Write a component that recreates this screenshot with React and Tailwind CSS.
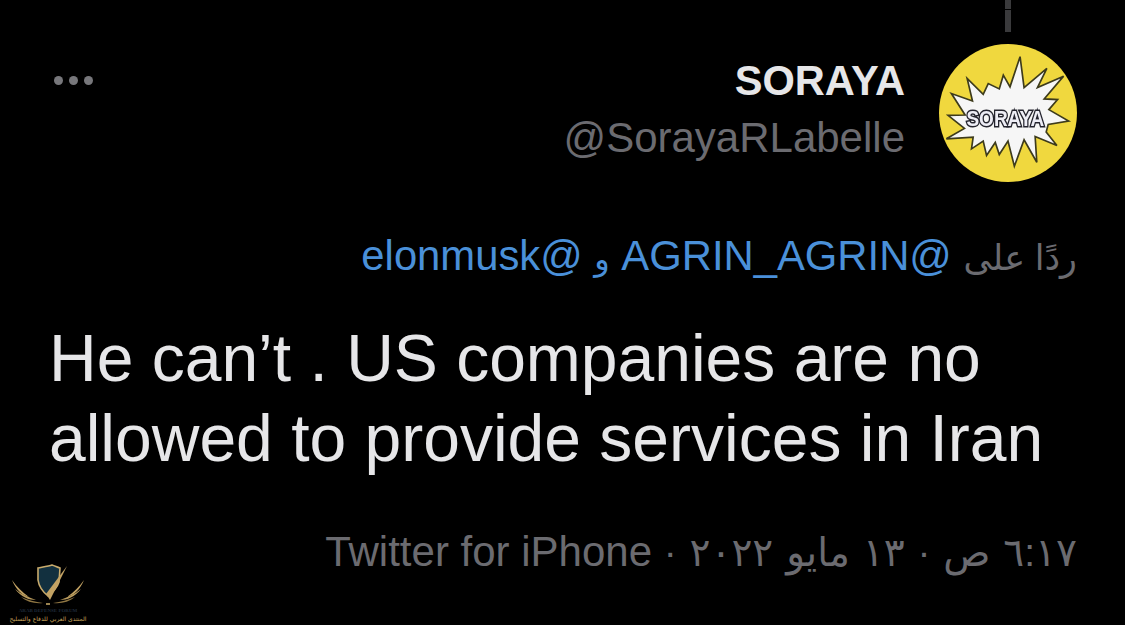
import React from 'react';

const burst =
  '300,170 312,262 380,205 352,262 430,228 372,296 412,298 386,328 445,362 384,372 378,395 410,435 345,408 350,485 312,418 283,497 264,422 238,462 226,426 200,465 190,422 155,445 160,410 80,415 134,384 85,345 136,344 95,280 158,302 142,235 190,282 205,250 238,266 250,225 270,260';

function Avatar() {
  return (
    <svg width="138" height="138" viewBox="58 132 412 412" className="shrink-0">
      <circle cx="264" cy="338" r="206" fill="#f0d83e" />
      <polygon points={burst} fill="#f6f6f6" stroke="#3d3b1c" strokeWidth="5" className="blur-[0.5px]" />
      <text
        x="256"
        y="378"
        textAnchor="middle"
        fontFamily="'Liberation Sans', sans-serif"
        fontWeight="700"
        fontSize="66"
        textLength="232"
        lengthAdjust="spacingAndGlyphs"
        fill="#eeeef6"
        stroke="#24242e"
        strokeWidth="9"
        paintOrder="stroke"
        className="blur-[0.3px]"
      >
        SORAYA
      </text>
    </svg>
  );
}

function Watermark() {
  return (
    <div className="absolute left-[8px] top-[563px] w-[80px] flex flex-col items-center">
      <svg width="76" height="44" viewBox="8 563 76 44" className="mb-[2px]">
        {/* wings */}
        <path d="M10 580 C14 590 20 595 27 597 C20 592 15 587 10 580Z" fill="#c2a263" />
        <path d="M13 589 C19 597 27 600 34 600 C26 597 19 594 13 589Z" fill="#b89a5c" />
        <path d="M19 597 C25 602 33 604 41 603 C33 602 26 600 19 597Z" fill="#8f7643" />
        <path d="M82 580 C78 590 72 595 65 597 C72 592 77 587 82 580Z" fill="#c2a263" />
        <path d="M79 589 C73 597 65 600 58 600 C66 597 73 594 79 589Z" fill="#b89a5c" />
        <path d="M73 597 C67 602 59 604 51 603 C59 602 66 600 73 597Z" fill="#8f7643" />
        {/* shield and check */}
        <path d="M36 568 C41 567 47 566 50 565 C53 566 55 567 58 568 L57 582 C55 588 51 592 46 596 C41 592 37 587 36 580Z" fill="#12303f" stroke="#c9ab6c" strokeWidth="1.6" />
        <path d="M44 594 L65 566 L48 600Z" fill="#c2a263" />
        <path d="M44 603 h4 v2 h-4z" fill="#9a8350" />
      </svg>
      <div className="-mt-[1px] text-[5px] leading-[6px] font-bold text-[#1f2a3a] whitespace-nowrap font-['Liberation_Serif',serif]">ARAB DEFENSE FORUM</div>
      <div dir="rtl" className="text-[6px] leading-[9px] text-[#c9a45c] whitespace-nowrap font-['DejaVu_Sans',sans-serif]">
        المنتدى العربي للدفاع والتسليح
      </div>
    </div>
  );
}

export default function App() {
  return (
    <div className="relative w-[1125px] h-[625px] bg-black overflow-hidden font-['Liberation_Sans','DejaVu_Sans',sans-serif]">
      {/* status line stub at the top */}
      <div className="absolute left-[1005px] top-0 w-[6px] h-[32px] bg-[#3a3a3c]">
        <div className="h-[10px] border-b border-black" />
      </div>

      <div className="flex flex-col pt-[44px] pl-[49px] pr-[48px]">
        {/* Header */}
        <div className="flex items-start justify-between">
          <div className="flex gap-[6px] pl-[5px] pt-[32px]">
            <span className="w-[9px] h-[9px] rounded-full bg-[#77777b]" />
            <span className="w-[9px] h-[9px] rounded-full bg-[#77777b]" />
            <span className="w-[9px] h-[9px] rounded-full bg-[#77777b]" />
          </div>
          <div className="flex items-start gap-[34px]">
            <div className="flex flex-col items-end pt-[13px]">
              <div className="text-[41.6px] leading-[48px] font-bold text-[#e6e6e8]">SORAYA</div>
              <div className="text-[42px] leading-[48px] mt-[9px] text-[#6b6b70]">@SorayaRLabelle</div>
            </div>
            <Avatar />
          </div>
        </div>

        {/* Reply line */}
        <div dir="rtl" className="mt-[50px] text-[41.8px] leading-[48px] whitespace-nowrap text-[#4a90d9]">
          <span className="text-[35px] text-[#6b6b70]">ردًا على</span> @AGRIN_AGRIN <span className="text-[32px]">و</span> @elonmusk
        </div>

        {/* Tweet body */}
        <div className="mt-[35px] text-[66px] leading-[80px] text-[#e6e6e8] whitespace-nowrap">
          <div>He can’t . US companies are no</div>
          <div>allowed to provide services in Iran</div>
        </div>

        {/* Meta line */}
        <div dir="rtl" className="mt-[50px] text-[42px] leading-[48px] whitespace-nowrap text-[#6b6b70]">
          <span className="text-[39px] [word-spacing:2px]">٦:١٧ ص · ١٣ مايو ٢٠٢٢ ·</span> Twitter for iPhone
        </div>
      </div>

      <Watermark />
    </div>
  );
}
